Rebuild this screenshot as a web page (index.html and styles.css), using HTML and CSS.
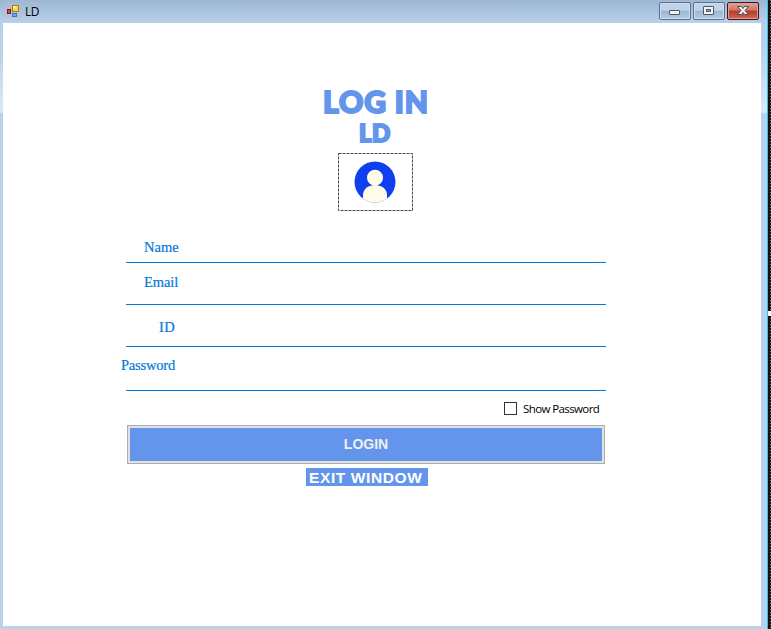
FILE: index.html
```html
<!DOCTYPE html>
<html lang="en">
<head>
<meta charset="utf-8">
<title>LD</title>
<link rel="stylesheet" href="styles.css">
</head>
<body>
<div class="desktop">
  <div class="window">
    <header class="titlebar">
      <svg class="app-icon" width="14" height="14" viewBox="0 0 14 14">
        <path d="M.5 4.500V.5H5M.5 9.500v4H5M13.500 8.500v5H11" fill="none" stroke="#c3c0bc"/>
        <rect x="6.500" y="1.500" width="6" height="6" fill="#ffd83d" stroke="#a87a10"/>
        <path d="M7 2h4L7 5z" fill="#fff3a8"/>
        <rect x="1.500" y="5.500" width="3" height="4" fill="#d94a3c" stroke="#8c1414"/>
        <rect x="6.500" y="9.500" width="4" height="3" fill="#75a8f4" stroke="#3a6fd0"/>
      </svg>
      <span class="title">LD</span>
      <div class="controls">
        <button class="control" aria-label="Minimize"><svg width="32" height="18" viewBox="0 0 32 18"><rect x="10.500" y="8.500" width="10" height="4" rx=".5" fill="#f4f5f7" stroke="#4c5668"/></svg></button>
        <button class="control" aria-label="Maximize"><svg width="32" height="18" viewBox="0 0 32 18"><rect x="10.500" y="4.500" width="10" height="8" rx=".5" fill="#f4f5f7" stroke="#4c5668"/><rect x="13.500" y="7.500" width="4" height="2" fill="#9bb7d3" stroke="#4c5668"/></svg></button>
        <button class="control close" aria-label="Close"><svg width="32" height="18" viewBox="0 0 32 18"><path d="M10.500 4.500h4l1.500 2 1.500-2h4L18 8.500l3.500 4h-4l-1.500-2-1.500 2h-4l3.500-4z" fill="#f6f4f4" stroke="#534a55"/></svg></button>
      </div>
    </header>
    <main class="client">
      <h1 class="heading">LOG IN</h1>
      <h2 class="subheading">LD</h2>
      <svg class="avatar" width="75" height="58" viewBox="0 0 75 58">
        <rect x=".5" y=".5" width="74" height="57" fill="none" stroke="#4a4a4a" stroke-dasharray="3 1"/>
        <clipPath id="disc"><circle cx="37" cy="29" r="20.500"/></clipPath>
        <circle cx="37" cy="29" r="20.500" fill="#103ff0"/>
        <g clip-path="url(#disc)" fill="#fffde8">
          <circle cx="37" cy="24.700" r="8"/>
          <path d="M25 50V42C25 28.500 49 28.500 49 42V50z"/>
        </g>
      </svg>
      <form class="form">
        <div class="field name"><label>Name</label></div>
        <div class="field email"><label>Email</label></div>
        <div class="field id"><label>ID</label></div>
        <div class="field password"><label>Password</label></div>
        <div class="show"><span class="box"></span><span class="show-text">Show Password</span></div>
        <button type="button" class="login">LOGIN</button>
      </form>
      <div class="exit"><span>EXIT WINDOW</span></div>
    </main>
  </div>
  <div class="edge"><div class="grip"></div></div>
</div>
</body>
</html>
```
FILE: styles.css
```css
* { box-sizing: border-box; }
body { margin: 0; overflow: hidden; }
.desktop { display: flex; width: 771px; height: 629px; }
.window {
  width: 767px;
  padding: 0 6px 3px 3px;
  background: linear-gradient(#9db7d3 0, #b7cfe8 22px, #b9d1ea 50px, #dce8f6 112px, #b9d1ea 114px);
}
.titlebar { display: flex; height: 23px; padding: 4px 2px 0 3px; margin-right: -1px; }
.app-icon { flex: none; }
.title {
  margin: 1px 0 0 5px;
  font: 12px/14px "Open Sans", sans-serif;
  color: #000;
  letter-spacing: -.4px;
}
.controls { display: flex; gap: 2px; margin: -2px 1px 0 auto; }
.control {
  width: 32px;
  height: 18px;
  padding: 0;
  border: 1px solid #5d708c;
  border-radius: 2px;
  background: linear-gradient(#c0d3e8 0 45%, #9cb7d3 50%, #b5cce4);
  box-shadow: inset 0 0 0 1px #cfddec;
}
.control svg { display: block; margin: -1px; }
.close {
  border-color: #48101f;
  background: linear-gradient(#dfa396 0, #cf7565 45%, #b53a24 50%, #cd6b51);
  box-shadow: inset 0 0 0 1px #dfa195;
}
.client {
  display: flex;
  flex-direction: column;
  height: 603px;
  padding-top: 60px;
  background: #fff;
}
.heading, .subheading {
  margin: 0;
  color: #6495ed;
  font-family: Lato, sans-serif;
  font-weight: 900;
  white-space: nowrap;
  -webkit-text-stroke: 2px #6495ed;
}
.heading { height: 37px; padding-left: 320px; font-size: 30px; line-height: 36px; letter-spacing: .9px; }
.subheading { height: 33px; padding-left: 356px; font-size: 24px; line-height: 26px; letter-spacing: .4px; }
.avatar { flex: none; margin-left: 335px; }
.form { width: 480px; margin-left: 123px; }
.field {
  display: flex;
  border-bottom: 1px solid #0078d7;
  color: #0078d7;
  font: 14.5px/18px "Liberation Serif", serif;
  -webkit-text-stroke: .2px #0078d7;
}
.name { height: 52px; padding: 27px 0 0 18px; }
.email { height: 42px; padding: 10px 0 0 18px; letter-spacing: -.1px; }
.id { height: 42px; padding: 13px 0 0 33px; letter-spacing: .3px; }
.password { height: 44px; padding: 9px 0 0; letter-spacing: -.2px; }
.password label { margin-left: -5px; }
.show { display: flex; height: 34px; padding: 11px 0 0 378px; }
.box { width: 13px; height: 13px; border: 1px solid #333; }
.show-text {
  margin-left: 6px;
  font: 11.5px/14px "Open Sans", sans-serif;
  letter-spacing: -.6px;
  white-space: nowrap;
}
.login {
  display: block;
  width: 478px;
  height: 39px;
  margin-left: 1px;
  padding: 0;
  border: 1px solid #adadad;
  background: #6495ed;
  box-shadow: inset 0 0 0 2px #e1e1e1;
  color: #f0f0f0;
  font: bold 14px/37px "Liberation Sans", sans-serif;
}
.exit { display: flex; margin: 4px 0 0 303px; }
.exit span {
  width: 122px;
  height: 18px;
  padding-left: 3px;
  background: #6495ed;
  color: #fff;
  font: bold 15.5px/19px "Liberation Sans", sans-serif;
  letter-spacing: .6px;
  white-space: nowrap;
}
.edge {
  width: 4px;
  padding-top: 311px;
  border-left: 1px solid #28c8f0;
  background: repeating-linear-gradient(#777 0 1px, #111 1px 3px) 2px 0 / 1px 100% no-repeat #111;
}
.grip { height: 5px; background: #fff; }
```
